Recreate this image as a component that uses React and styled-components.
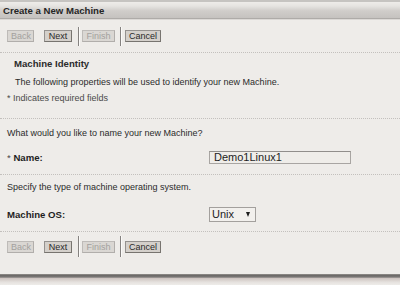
import React from "react";
import styled, { createGlobalStyle } from "styled-components";

const Global = createGlobalStyle`
  html, body { margin: 0; padding: 0; background: #eeece9; }
  body { font-family: "Liberation Sans", Arial, sans-serif; }
`;

const Page = styled.div`
  width: 400px;
  height: 285px;
  background: #eeece9;
  display: flex;
  flex-direction: column;
  overflow: hidden;
  color: #2b2b2b;
  font-size: 9px;
`;

const Header = styled.div`
  height: 16px;
  border-top: 2px solid #c6c4c1;
  border-bottom: 1px solid #aeaba8;
  box-shadow: 0 1px 0 #dcd9d6;
  background: linear-gradient(#eeece9 0%, #e6e4e1 25%, #d0cdca 55%, #c5c2bf 100%);
  display: flex;
  align-items: center;
  padding-left: 3px;
  margin-bottom: 1px;
`;

const Title = styled.div`
  font-weight: bold;
  font-size: 9.6px;
  color: #262626;
`;

const Toolbar = styled.div`
  height: ${(p) => p.$h}px;
  display: flex;
  align-items: center;
  padding-left: 7px;
`;

const Btn = styled.div`
  height: 10px;
  line-height: 10px;
  padding: 0 3px;
  width: ${(p) => p.$w}px;
  box-sizing: content-box;
  text-align: center;
  font-size: 9px;
  margin-right: ${(p) => p.$mr}px;
  background: ${(p) => (p.$disabled ? "#dad7d3" : "#d4d0cb")};
  color: ${(p) => (p.$disabled ? "#a3a19e" : "#2a2a2a")};
  border: 1px solid ${(p) => (p.$disabled ? "#bebbb8" : "#94918e")};
  border-right-color: ${(p) => (p.$disabled ? "#b1aeab" : "#77746f")};
  border-bottom-color: ${(p) => (p.$disabled ? "#b1aeab" : "#77746f")};
`;

const Sep = styled.div`
  width: 1px;
  height: ${(p) => p.$h}px;
  background: #858280;
  box-shadow: 1px 0 0 #fbfaf8;
  margin-right: ${(p) => p.$mr}px;
`;

const Dotted = styled.div`
  height: 0;
  border-top: 1px dotted #c3c0bd;
`;

const Line = styled.div`
  height: ${(p) => p.$h}px;
  display: flex;
  align-items: center;
  padding-left: ${(p) => p.$pl}px;
  font-weight: ${(p) => (p.$bold ? "bold" : "normal")};
  font-size: ${(p) => (p.$bold ? "9.6px" : "9px")};
  color: ${(p) => (p.$muted ? "#4a4a4a" : "#2b2b2b")};
`;

const Spacer = styled.div`
  height: ${(p) => p.$h}px;
`;

const FieldRow = styled.div`
  height: ${(p) => p.$h}px;
  display: grid;
  grid-template-columns: 209px auto;
  align-items: center;
`;

const Label = styled.div`
  padding-left: 7px;
  font-weight: bold;
  font-size: 9.6px;
  color: #1e1e1e;
`;

const Star = styled.span`
  font-weight: normal;
  color: #444;
`;

const TextInput = styled.div`
  width: 136px;
  height: 11px;
  line-height: 11px;
  border: 1px solid #a8a5a2;
  border-top-color: #918e8b;
  padding: 0 0 0 4px;
  font-family: "Liberation Sans", Arial, sans-serif;
  font-size: 11px;
  color: #1e1e1e;
  background: #efede9;
`;

const Select = styled.div`
  height: 13px;
  border: 1px solid #a3a09d;
  background: #f2f0ed;
  display: flex;
  align-items: center;
  justify-content: space-between;
  padding: 0 5px 0 2px;
  box-sizing: content-box;
  width: 38px;
  font-size: 11px;
  color: #1e1e1e;
`;

const Arrow = styled.span`
  width: 0;
  height: 0;
  border-left: 2.5px solid transparent;
  border-right: 2.5px solid transparent;
  border-top: 5px solid #1e1e1e;
`;

const BottomBar = styled.div`
  height: 4px;
  background: linear-gradient(#94918e, #6a6866 40%, #7a7775 70%, #a9a4a1);
`;

const Under = styled.div`
  flex: 1;
  background: linear-gradient(#cbc2be, #e6e2df 60%, #eeece9);
`;

function Buttons({ h, sep }) {
  return (
    <Toolbar $h={h}>
      <Btn $disabled $w={19} $mr={10}>Back</Btn>
      <Btn $w={20} $mr={6}>Next</Btn>
      <Sep $h={sep} $mr={3} />
      <Btn $disabled $w={25} $mr={5}>Finish</Btn>
      <Sep $h={sep} $mr={4} />
      <Btn $w={28} $mr={0}>Cancel</Btn>
    </Toolbar>
  );
}

export default function App() {
  return (
    <Page>
      <Global />
      <Header>
        <Title>Create a New Machine</Title>
      </Header>
      <Buttons h={32} sep={19} />
      <Dotted />
      <Line $h={20} $pl={14} $bold>Machine Identity</Line>
      <Line $h={18} $pl={15}>The following properties will be used to identify your new Machine.</Line>
      <Line $h={14} $pl={7} $muted>* Indicates required fields</Line>
      <Spacer $h={13} />
      <Dotted />
      <Line $h={28} $pl={7}>What would you like to name your new Machine?</Line>
      <FieldRow $h={21}>
        <Label><Star>* </Star>Name:</Label>
        <TextInput>Demo1Linux1</TextInput>
      </FieldRow>
      <Spacer $h={6} />
      <Dotted />
      <Line $h={24} $pl={7}>Specify the type of machine operating system.</Line>
      <Spacer $h={1} />
      <FieldRow $h={28}>
        <Label>Machine OS:</Label>
        <Select>
          <span>Unix</span>
          <Arrow />
        </Select>
      </FieldRow>
      <Spacer $h={3} />
      <Dotted />
      <Buttons h={29} sep={21} />
      <Spacer $h={13} />
      <BottomBar />
      <Under />
    </Page>
  );
}
